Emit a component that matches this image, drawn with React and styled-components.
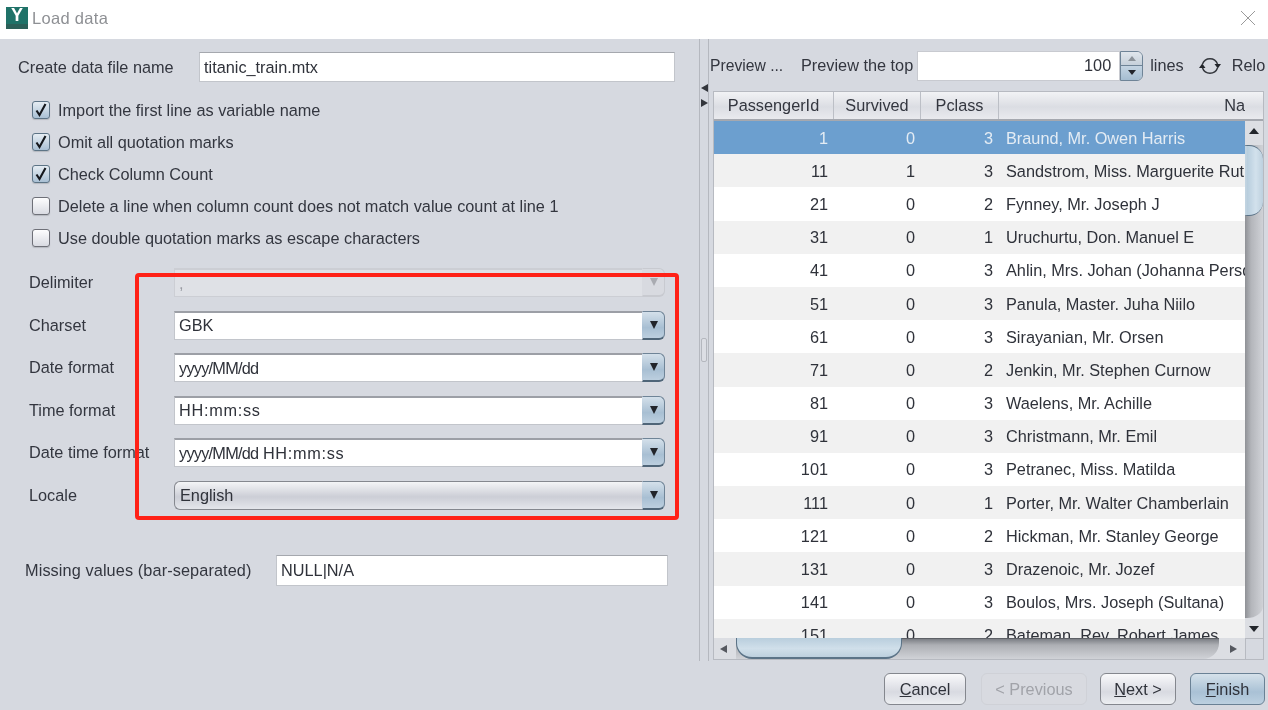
import React from "react";
import styled, { createGlobalStyle } from "styled-components";

const Global = createGlobalStyle`
  html, body { margin: 0; padding: 0; width: 1268px; height: 710px; overflow: hidden; background: #d6d9e0; }
  * { box-sizing: border-box; }
  #root { width: 1268px; height: 710px; }
`;

const Window = styled.div`
  position: relative;
  width: 1268px;
  height: 710px;
  overflow: hidden;
  display: flex;
  flex-direction: column;
  font-family: "Liberation Sans", Arial, sans-serif;
  font-size: 16.3px;
  color: #33363f;
  background: #d6d9e0;
  filter: blur(0.35px);
`;
const TitleBar = styled.header`
  height: 39px;
  flex: none;
  background: #fff;
  display: flex;
  align-items: center;
  padding: 0 12px 3px 6px;
  gap: 4px;
`;
const AppLogo = styled.div`
  width: 22px;
  height: 22px;
  background: #1f7268;
  color: #fff;
  font-weight: 700;
  font-size: 18px;
  line-height: 17px;
  text-align: center;
  border-bottom: 5px solid #2b5f58;
`;
const TitleText = styled.span`
  font-size: 16.5px;
  letter-spacing: 0.3px;
  color: #8e9094;
  flex: 1;
`;
const Body = styled.div`
  flex: 1;
  display: flex;
  min-height: 0;
`;
const LeftPane = styled.section`
  width: 699px;
  flex: none;
  padding-top: 13px;
`;
const FileRow = styled.div`
  display: flex;
  align-items: center;
  height: 30px;
  padding-left: 18px;
`;
const FileLabel = styled.label`
  width: 181px;
  flex: none;
`;
const TextInput = styled.div`
  height: 100%;
  width: ${(p) => p.$w}px;
  background: #fff;
  border: 1px solid #c2c5cb;
  border-top-color: #a5a8ae;
  padding: 0 4px;
  display: flex;
  align-items: center;
  color: #2f323a;
`;
const Checks = styled.div`
  display: flex;
  flex-direction: column;
  gap: 10px;
  padding: 17px 0 0 32px;
`;
const CheckRow = styled.div`
  display: flex;
  align-items: center;
  gap: 8px;
  height: 22px;
`;
const CheckBox = styled.span`
  width: 18px;
  height: 18px;
  border-radius: 3px;
  border: 1px solid ${(p) => (p.$on ? "#5d7486" : "#6e7078")};
  background: ${(p) =>
    p.$on
      ? "linear-gradient(#e6edf3, #a9c0d4)"
      : "linear-gradient(#fdfdfe, #d9dbe2)"};
  box-shadow: 0 1px 1px #b5b8bf;
  display: flex;
  align-items: center;
  justify-content: center;
`;
const Fields = styled.div`
  display: flex;
  flex-direction: column;
  gap: 13.5px;
  padding: 19px 0 0 29px;
`;
const FieldRow = styled.div`
  display: flex;
  align-items: center;
  height: 29px;
`;
const FieldLabel = styled.label`
  width: 145px;
  flex: none;
  white-space: nowrap;
`;
const Combo = styled.div`
  width: 491px;
  height: 100%;
  display: flex;
`;
const ComboValue = styled.div`
  flex: 1;
  display: flex;
  align-items: center;
  padding: 0 4px;
  white-space: pre;
  border: 1px solid #c2c5cb;
  border-top: 2px solid #9c9fa6;
  border-right: 0;
  background: ${(p) => (p.$disabled ? "#dfe1e6" : "#fff")};
  color: ${(p) => (p.$disabled ? "#9a9ca3" : "#2f323a")};
  ${(p) => p.$disabled && "border-color: #ccced4;"}
  ${(p) =>
    p.$raised &&
    `
    padding: 0 5px;
    background: linear-gradient(#f4f5f7, #ccced6 55%, #e4e6eb);
    border: 1px solid #85888f;
    border-right: 0;
    border-radius: 6px 0 0 6px;
  `}
`;
const DatePart = styled.span`
  letter-spacing: -0.75px;
`;
const TimePart = styled.span`
  letter-spacing: 0.7px;
`;
const ComboButton = styled.div`
  width: 23px;
  flex: none;
  border-radius: 0 6px 6px 0;
  border: 1px solid ${(p) => (p.$disabled ? "#c8cad0" : "#6f8497")};
  border-bottom: 2px solid ${(p) => (p.$disabled ? "#c8cad0" : "#4f6578")};
  border-left-color: transparent;
  background: ${(p) =>
    p.$disabled
      ? "#d8dae0"
      : "linear-gradient(#d4e0ea, #a8bfd3 60%, #bccfdf)"};
  display: flex;
  align-items: center;
  justify-content: center;
`;
const Triangle = styled.span`
  display: block;
  width: 0;
  height: 0;
  border-left: ${(p) => p.$s || 5}px solid transparent;
  border-right: ${(p) => p.$s || 5}px solid transparent;
  ${(p) => (p.$up ? "border-bottom" : "border-top")}: ${(p) => p.$h || (p.$s || 5) + 1}px solid ${(p) => p.$c || "#22252b"};
`;
const SideTriangle = styled.span`
  display: block;
  width: 0;
  height: 0;
  border-top: 4px solid transparent;
  border-bottom: 4px solid transparent;
  ${(p) => (p.$left ? "border-right" : "border-left")}: 7px solid ${(p) => p.$c || "#55585f"};
`;
const MissingRow = styled.div`
  display: flex;
  align-items: center;
  height: 31px;
  margin: 45px 0 0 25px;
`;
const MissingLabel = styled.label`
  width: 251px;
  flex: none;
  letter-spacing: 0.1px;
`;
const Splitter = styled.div`
  width: 10px;
  flex: none;
  height: 622px;
  border-left: 1px solid #b5b8bf;
  border-right: 1px solid #b5b8bf;
  position: relative;
  display: flex;
  flex-direction: column;
  align-items: center;
  padding-top: 45px;
  gap: 7px;
`;
const Grip = styled.div`
  width: 6px;
  height: 24px;
  margin-top: 224px;
  border: 1px solid #b4b7be;
  border-radius: 2px;
  background: #dcdee4;
`;
const RightPane = styled.section`
  flex: 1;
  min-width: 0;
  display: flex;
  flex-direction: column;
  overflow: hidden;
`;
const PreviewBar = styled.div`
  height: 52px;
  width: 557px;
  overflow: hidden;
  flex: none;
  display: flex;
  align-items: center;
  padding: 1px 0 0 1px;
  white-space: nowrap;
`;
const PreviewTab = styled.span`
  width: 75px;
  flex: none;
  font-size: 15.7px;
`;
const PreviewTop = styled.span`
  margin-left: 16px;
  flex: none;
`;
const Spin = styled.div`
  display: flex;
  height: 30px;
  width: 226px;
  margin-left: 4px;
  flex: none;
`;
const SpinValue = styled.div`
  flex: 1;
  background: #fff;
  border: 1px solid #c8cad0;
  display: flex;
  align-items: center;
  justify-content: flex-end;
  padding-right: 8px;
  color: #2f323a;
`;
const SpinButtons = styled.div`
  width: 23px;
  display: flex;
  flex-direction: column;
  border: 1px solid #6f8497;
  border-radius: 0 6px 6px 0;
  overflow: hidden;
`;
const SpinButton = styled.div`
  flex: 1;
  display: flex;
  align-items: center;
  justify-content: center;
  background: ${(p) => (p.$top ? "linear-gradient(#e0e6ec, #c6d0da)" : "linear-gradient(#c4d4e2, #a5bdd1)")};
  & + & { border-top: 1px solid #6f8497; }
`;
const LinesLabel = styled.span`
  margin-left: 7px;
  flex: none;
`;
const ReloadIcon = styled.svg`
  margin-left: 15px;
  margin-right: 11px;
  flex: none;
`;
const ReloadLabel = styled.span`
  flex: none;
`;
const TableFrame = styled.div`
  width: 551px;
  height: 569px;
  margin-left: 4px;
  border: 1px solid #b7bac1;
  display: grid;
  grid-template-columns: 531px 18px;
  grid-template-rows: 29px 517px 21px;
  background: #d6d9e0;
`;
const HeaderRow = styled.div`
  grid-column: 1 / 3;
  display: flex;
  background: linear-gradient(#f2f3f5, #dbdde3 55%, #e9eaee);
  border-bottom: 2px solid #a5a8af;
  overflow: hidden;
`;
const HeaderCell = styled.div`
  width: ${(p) => p.$w}px;
  flex: none;
  border-right: 1px solid #bcbfc6;
  text-align: center;
  line-height: 27px;
  color: #33363f;
  ${(p) => p.$name && "border-right: 0; text-align: right; overflow: hidden;"}
`;
const Rows = styled.div`
  background: #fff;
  overflow: hidden;
`;
const Row = styled.div`
  display: flex;
  height: 33.2px;
  padding-top: 1px;
  align-items: center;
  white-space: nowrap;
  background: ${(p) => (p.$selected ? "#6c9fcf" : p.$odd ? "#f1f1f1" : "#fff")};
  color: ${(p) => (p.$selected ? "#e4ecf4" : "#2f323a")};
`;
const NumCell = styled.div`
  width: ${(p) => p.$w}px;
  flex: none;
  text-align: right;
  padding-right: 6px;
`;
const NameCell = styled.div`
  flex: 1;
  min-width: 0;
  overflow: hidden;
  padding-left: 7px;
`;
const VScroll = styled.div`
  position: relative;
  background: #dcdee3;
  display: flex;
  flex-direction: column;
  align-items: center;
  justify-content: space-between;
  padding: 7px 0 6px;
`;
const VTrack = styled.div`
  position: absolute;
  top: 24px;
  left: 0;
  right: 0;
  bottom: 20px;
  border-radius: 0 0 16px 0 / 0 0 12px 0;
  background: linear-gradient(90deg, #8f9196 0, #b4b6bb 35%, #d0d2d7 100%);
`;
const VThumb = styled.div`
  position: absolute;
  top: 24px;
  left: 0;
  right: 0;
  height: 71px;
  border: 1px solid #5b7387;
  border-left-width: 2px;
  border-left-color: transparent;
  border-right: 0;
  border-radius: 0 14px 14px 0;
  background: linear-gradient(90deg, #b7cddd, #d2e1ec 55%, #bdd0de);
`;
const ArrowSlot = styled.span`
  position: relative;
  z-index: 1;
  display: flex;
  align-items: center;
  justify-content: center;
`;
const HScroll = styled.div`
  position: relative;
  background: #dcdee3;
  display: flex;
  align-items: center;
  justify-content: space-between;
  padding: 0 8px 0 6px;
`;
const HTrack = styled.div`
  position: absolute;
  left: 22px;
  top: 0;
  bottom: 0;
  right: 26px;
  border-top: 1px solid #5d6066;
  border-radius: 0 0 16px 0 / 0 0 16px 0;
  background: linear-gradient(#7c7f85 0, #adafb4 30%, #d0d2d7 100%);
`;
const HThumb = styled.div`
  position: absolute;
  left: 22px;
  top: 0;
  bottom: 0;
  width: 166px;
  border: 1px solid #5b7387;
  border-top: 0;
  border-bottom-width: 2px;
  border-radius: 0 0 16px 16px;
  background: linear-gradient(#b9cedd, #d0dfea 55%, #bdd0de);
`;
const Corner = styled.div`
  background: #d6d9e0;
  border-left: 1px solid #b7bac1;
  border-top: 1px solid #b7bac1;
`;
const Footer = styled.footer`
  position: absolute;
  right: 3px;
  bottom: 5px;
  display: flex;
  align-items: center;
`;
const WizardButton = styled.div`
  height: 32px;
  width: ${(p) => p.$w}px;
  margin-left: ${(p) => p.$gap}px;
  border-radius: 6px;
  display: flex;
  align-items: center;
  justify-content: center;
  border: 1px solid ${(p) => (p.$primary ? "#6a8195" : p.$disabled ? "#cfd1d7" : "#84878e")};
  color: ${(p) => (p.$disabled ? "#a1a3a9" : "#2f323a")};
  background: ${(p) =>
    p.$primary
      ? "linear-gradient(#d5e1ea, #a9c1d5 60%, #bcd0e0)"
      : p.$disabled
      ? "#d8dae0"
      : "linear-gradient(#f9f9fb, #d8dae1 60%, #eceef1)"};
  u { text-decoration: underline; }
`;
const Annotation = styled.div`
  position: absolute;
  left: 135px;
  top: 273px;
  width: 544px;
  height: 247px;
  border: 4px solid #ff2117;
  border-radius: 4px;
  pointer-events: none;
`;

const Check = () => (
  <svg width="14" height="14" viewBox="0 0 14 14">
    <path d="M2.5 7.5 L5.5 12 L11.5 1" fill="none" stroke="#15181d" strokeWidth="2.1" />
  </svg>
);

const checks = [
  ["Import the first line as variable name", true],
  ["Omit all quotation marks", true],
  ["Check Column Count", true],
  ["Delete a line when column count does not match value count at line 1", false],
  ["Use double quotation marks as escape characters", false],
];
const fields = [
  { label: "Delimiter", value: ",", disabled: true },
  { label: "Charset", value: "GBK" },
  { label: "Date format", value: <DatePart>yyyy/MM/dd</DatePart> },
  { label: "Time format", value: <TimePart>HH:mm:ss</TimePart> },
  {
    label: "Date time format",
    value: (
      <span>
        <DatePart>yyyy/MM/dd</DatePart> <TimePart>HH:mm:ss</TimePart>
      </span>
    ),
  },
  { label: "Locale", value: "English", raised: true },
];
const rows = [
  [1, 0, 3, "Braund, Mr. Owen Harris"],
  [11, 1, 3, "Sandstrom, Miss. Marguerite Ruth"],
  [21, 0, 2, "Fynney, Mr. Joseph J"],
  [31, 0, 1, "Uruchurtu, Don. Manuel E"],
  [41, 0, 3, "Ahlin, Mrs. Johan (Johanna Persdotter Larsson)"],
  [51, 0, 3, "Panula, Master. Juha Niilo"],
  [61, 0, 3, "Sirayanian, Mr. Orsen"],
  [71, 0, 2, "Jenkin, Mr. Stephen Curnow"],
  [81, 0, 3, "Waelens, Mr. Achille"],
  [91, 0, 3, "Christmann, Mr. Emil"],
  [101, 0, 3, "Petranec, Miss. Matilda"],
  [111, 0, 1, "Porter, Mr. Walter Chamberlain"],
  [121, 0, 2, "Hickman, Mr. Stanley George"],
  [131, 0, 3, "Drazenoic, Mr. Jozef"],
  [141, 0, 3, "Boulos, Mrs. Joseph (Sultana)"],
  [151, 0, 2, "Bateman, Rev. Robert James"],
];

export default function App() {
  return (
    <Window>
      <Global />
      <TitleBar>
        <AppLogo>Y</AppLogo>
        <TitleText>Load data</TitleText>
        <svg width="16" height="16" viewBox="0 0 16 16">
          <path d="M1 1 L15 15 M15 1 L1 15" stroke="#9a9a9a" strokeWidth="1" />
        </svg>
      </TitleBar>
      <Body>
        <LeftPane>
          <FileRow>
            <FileLabel>Create data file name</FileLabel>
            <TextInput $w={476}>titanic_train.mtx</TextInput>
          </FileRow>
          <Checks>
            {checks.map(([text, on]) => (
              <CheckRow key={text}>
                <CheckBox $on={on}>{on && <Check />}</CheckBox>
                <span>{text}</span>
              </CheckRow>
            ))}
          </Checks>
          <Fields>
            {fields.map((f) => (
              <FieldRow key={f.label}>
                <FieldLabel>{f.label}</FieldLabel>
                <Combo>
                  <ComboValue $disabled={f.disabled} $raised={f.raised}>{f.value}</ComboValue>
                  <ComboButton $disabled={f.disabled}>
                    <Triangle $s={4} $h={8} $c={f.disabled ? "#a9abb1" : "#22252b"} />
                  </ComboButton>
                </Combo>
              </FieldRow>
            ))}
          </Fields>
          <MissingRow>
            <MissingLabel>Missing values (bar-separated)</MissingLabel>
            <TextInput $w={392}>NULL|N/A</TextInput>
          </MissingRow>
        </LeftPane>
        <Splitter>
          <SideTriangle $left $c="#33363c" />
          <SideTriangle $c="#33363c" />
          <Grip />
        </Splitter>
        <RightPane>
          <PreviewBar>
            <PreviewTab>Preview ...</PreviewTab>
            <PreviewTop>Preview the top</PreviewTop>
            <Spin>
              <SpinValue>100</SpinValue>
              <SpinButtons>
                <SpinButton $top><Triangle $up $s={4} $c="#8b9299" /></SpinButton>
                <SpinButton><Triangle $s={4} /></SpinButton>
              </SpinButtons>
            </Spin>
            <LinesLabel>lines</LinesLabel>
            <ReloadIcon width="22" height="20" viewBox="0 0 22 20">
              <path d="M3.5 8 A8 8 0 0 1 18.5 8 M18.5 12 A8 8 0 0 1 3.5 12" fill="none" stroke="#33363c" strokeWidth="1.5" />
              <path d="M15.5 8 L22 8 L18.8 12.5 Z M0 12 L6.5 12 L3.2 7.5 Z" fill="#22252b" />
            </ReloadIcon>
            <ReloadLabel>Reload</ReloadLabel>
          </PreviewBar>
          <TableFrame>
            <HeaderRow>
              <HeaderCell $w={120}>PassengerId</HeaderCell>
              <HeaderCell $w={87}>Survived</HeaderCell>
              <HeaderCell $w={78}>Pclass</HeaderCell>
              <HeaderCell $name $w={246}>Na</HeaderCell>
            </HeaderRow>
            <Rows>
              {rows.map((r, i) => (
                <Row key={r[0]} $selected={i === 0} $odd={i % 2 === 1}>
                  <NumCell $w={120}>{r[0]}</NumCell>
                  <NumCell $w={87}>{r[1]}</NumCell>
                  <NumCell $w={78}>{r[2]}</NumCell>
                  <NameCell>{r[3]}</NameCell>
                </Row>
              ))}
            </Rows>
            <VScroll>
              <VTrack />
              <ArrowSlot><Triangle $up /></ArrowSlot>
              <VThumb />
              <ArrowSlot><Triangle /></ArrowSlot>
            </VScroll>
            <HScroll>
              <HTrack />
              <ArrowSlot><SideTriangle $left /></ArrowSlot>
              <HThumb />
              <ArrowSlot><SideTriangle /></ArrowSlot>
            </HScroll>
            <Corner />
          </TableFrame>
        </RightPane>
      </Body>
      <Footer>
        <WizardButton $w={82} $gap={0}><span><u>C</u>ancel</span></WizardButton>
        <WizardButton $w={106} $gap={15} $disabled>&lt; Previous</WizardButton>
        <WizardButton $w={76} $gap={13}><span><u>N</u>ext &gt;</span></WizardButton>
        <WizardButton $w={75} $gap={14} $primary><span><u>F</u>inish</span></WizardButton>
      </Footer>
      <Annotation />
    </Window>
  );
}
